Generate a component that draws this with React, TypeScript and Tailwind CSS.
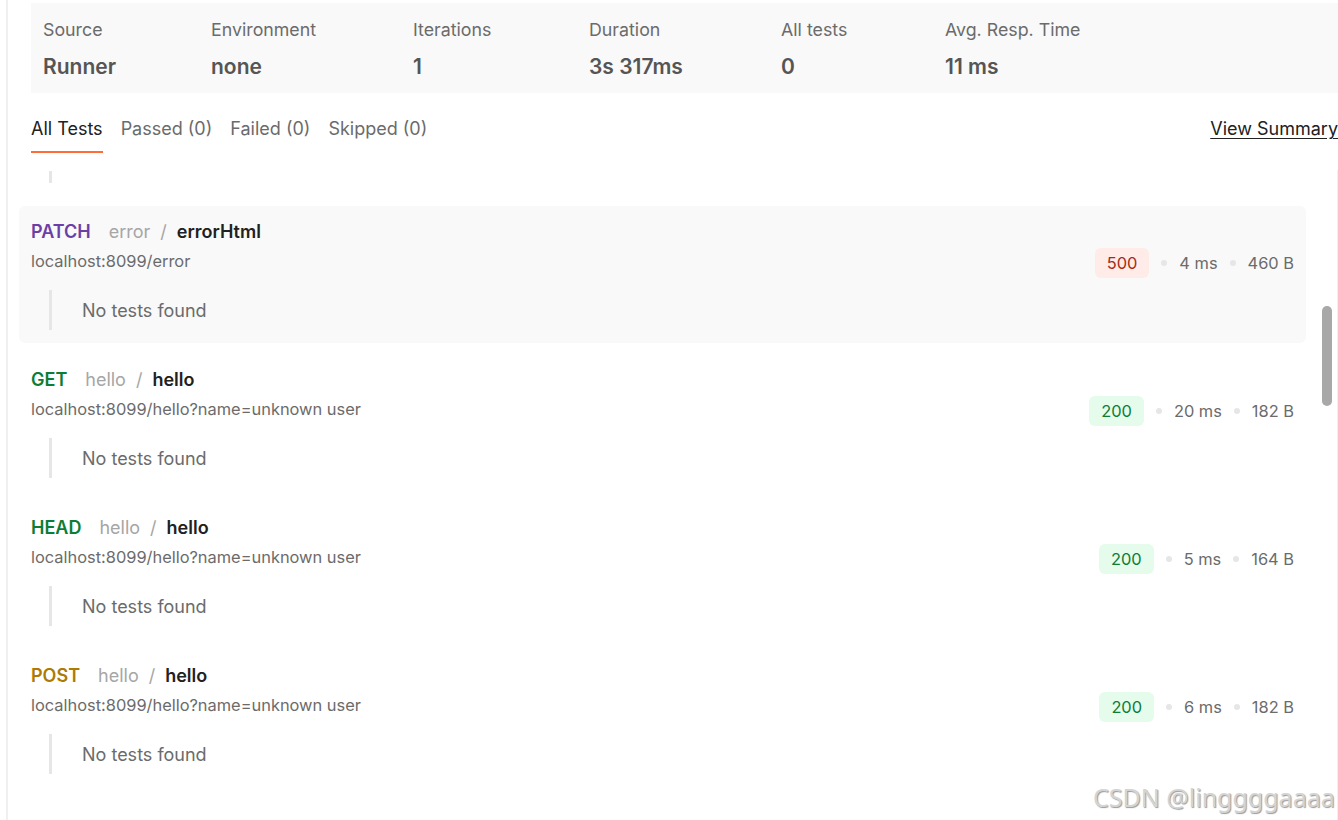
import React from "react";

type Item = {
  method: string;
  methodColor: string;
  folder: string;
  name: string;
  url: string;
  code: string;
  ok: boolean;
  time: string;
  size: string;
  highlight?: boolean;
};

const items: Item[] = [
  { method: "PATCH", methodColor: "text-[#6b3fa6]", folder: "error", name: "errorHtml", url: "localhost:8099/error", code: "500", ok: false, time: "4 ms", size: "460 B", highlight: true },
  { method: "GET", methodColor: "text-[#0b7d36]", folder: "hello", name: "hello", url: "localhost:8099/hello?name=unknown user", code: "200", ok: true, time: "20 ms", size: "182 B" },
  { method: "HEAD", methodColor: "text-[#0b7d36]", folder: "hello", name: "hello", url: "localhost:8099/hello?name=unknown user", code: "200", ok: true, time: "5 ms", size: "164 B" },
  { method: "POST", methodColor: "text-[#ad7a03]", folder: "hello", name: "hello", url: "localhost:8099/hello?name=unknown user", code: "200", ok: true, time: "6 ms", size: "182 B" },
];

const stats = [
  { label: "Source", value: "Runner", w: "w-[168px]" },
  { label: "Environment", value: "none", w: "w-[202px]" },
  { label: "Iterations", value: "1", w: "w-[176px]" },
  { label: "Duration", value: "3s 317ms", w: "w-[192px]" },
  { label: "All tests", value: "0", w: "w-[164px]" },
  { label: "Avg. Resp. Time", value: "11 ms", w: "w-[200px]" },
];

function Dot() {
  return <span className="inline-block w-[6px] h-[6px] rounded-full bg-[#e6e6e6]" />;
}

function Row({ it }: { it: Item }) {
  return (
    <div className={`h-[137px] mb-[11px] rounded-[6px] px-3 pt-[14px] ${it.highlight ? "bg-[#f9f9f9]" : ""}`}>
      <div className="flex items-start justify-between">
        <div className="flex flex-col">
          <div className="h-6 flex items-center text-[18px] leading-6">
            <span className={`font-semibold ${it.methodColor}`}>{it.method}</span>
            <span className="ml-[18px] text-[#a6a6a6]">{it.folder}</span>
            <span className="mx-[10px] text-[#a6a6a6]">/</span>
            <span className="font-semibold text-[#212121]">{it.name}</span>
          </div>
          <div className="mt-[5px] h-6 leading-6 text-[16.4px] text-[#6b6b6b]">{it.url}</div>
        </div>
        <div className="pt-[28px] flex items-center gap-3 text-[16.4px] text-[#6b6b6b]">
          <span
            className={`h-[30px] px-3 rounded-[6px] flex items-center ${it.ok ? "bg-[#e5fbeb] text-[#0b7d36]" : "bg-[#ffebe7] text-[#a62a16]"}`}
          >
            {it.code}
          </span>
          <Dot />
          <span>{it.time}</span>
          <Dot />
          <span>{it.size}</span>
        </div>
      </div>
      <div className="mt-[12px] ml-[18px] border-l-[3px] border-[#e6e6e6] h-[40px] flex items-center pl-[30px] text-[18px] text-[#6b6b6b]">
        No tests found
      </div>
    </div>
  );
}

export default function App() {
  return (
    <div className="relative w-[1338px] h-[820px] overflow-hidden bg-white font-['Inter',sans-serif]">
      <div className="ml-[6px] h-full border-l-2 border-[#f0f0f0] flex flex-col">
        <div className="pt-[3px] pl-[23px]">
          <div className="h-[90px] bg-[#f9f9f9] flex px-3 pt-[15px]">
            {stats.map((s) => (
              <div key={s.label} className={`${s.w} flex flex-col`}>
                <span className="text-[17.8px] leading-6 text-[#6b6b6b]">{s.label}</span>
                <span className="mt-[13px] text-[21px] leading-6 font-semibold text-[#555555]">{s.value}</span>
              </div>
            ))}
          </div>
        </div>
        <div className="pl-[23px] mt-[24px] flex items-start justify-between">
          <div className="flex gap-[18px] text-[18px]">
            <div className="flex flex-col">
              <span className="leading-6 text-[#212121]">All Tests</span>
              <span className="mt-[10px] h-[2px] bg-[#ff6c37]" />
            </div>
            <span className="leading-6 text-[#6b6b6b]">Passed (0)</span>
            <span className="leading-6 text-[#6b6b6b]">Failed (0)</span>
            <span className="leading-6 text-[#6b6b6b]">Skipped (0)</span>
          </div>
          <span className="text-[18px] leading-6 text-[#212121] underline underline-offset-[3px]">View Summary</span>
        </div>
        <div className="pl-[11px] pr-[32px] mt-[18px]">
          <div className="ml-[30px] w-[3px] h-[12px] bg-[#e6e6e6]" />
          <div className="mt-[23px]">
            {items.map((it) => (
              <Row key={it.method} it={it} />
            ))}
          </div>
        </div>
      </div>
      <div className="absolute left-[1322px] top-[306px] w-[10px] h-[100px] rounded-full bg-[#a8a8a8]" />
      <div className="absolute right-0 top-[170px] bottom-0 w-px bg-[#f0f0f0]" />
      <div className="absolute left-[1093px] top-[781px] text-[25px] leading-8 text-[#d4d4d4] font-['Noto_Sans',sans-serif] [text-shadow:1px_1px_1px_#9a9a9a]">
        CSDN @linggggaaaa
      </div>
    </div>
  );
}
